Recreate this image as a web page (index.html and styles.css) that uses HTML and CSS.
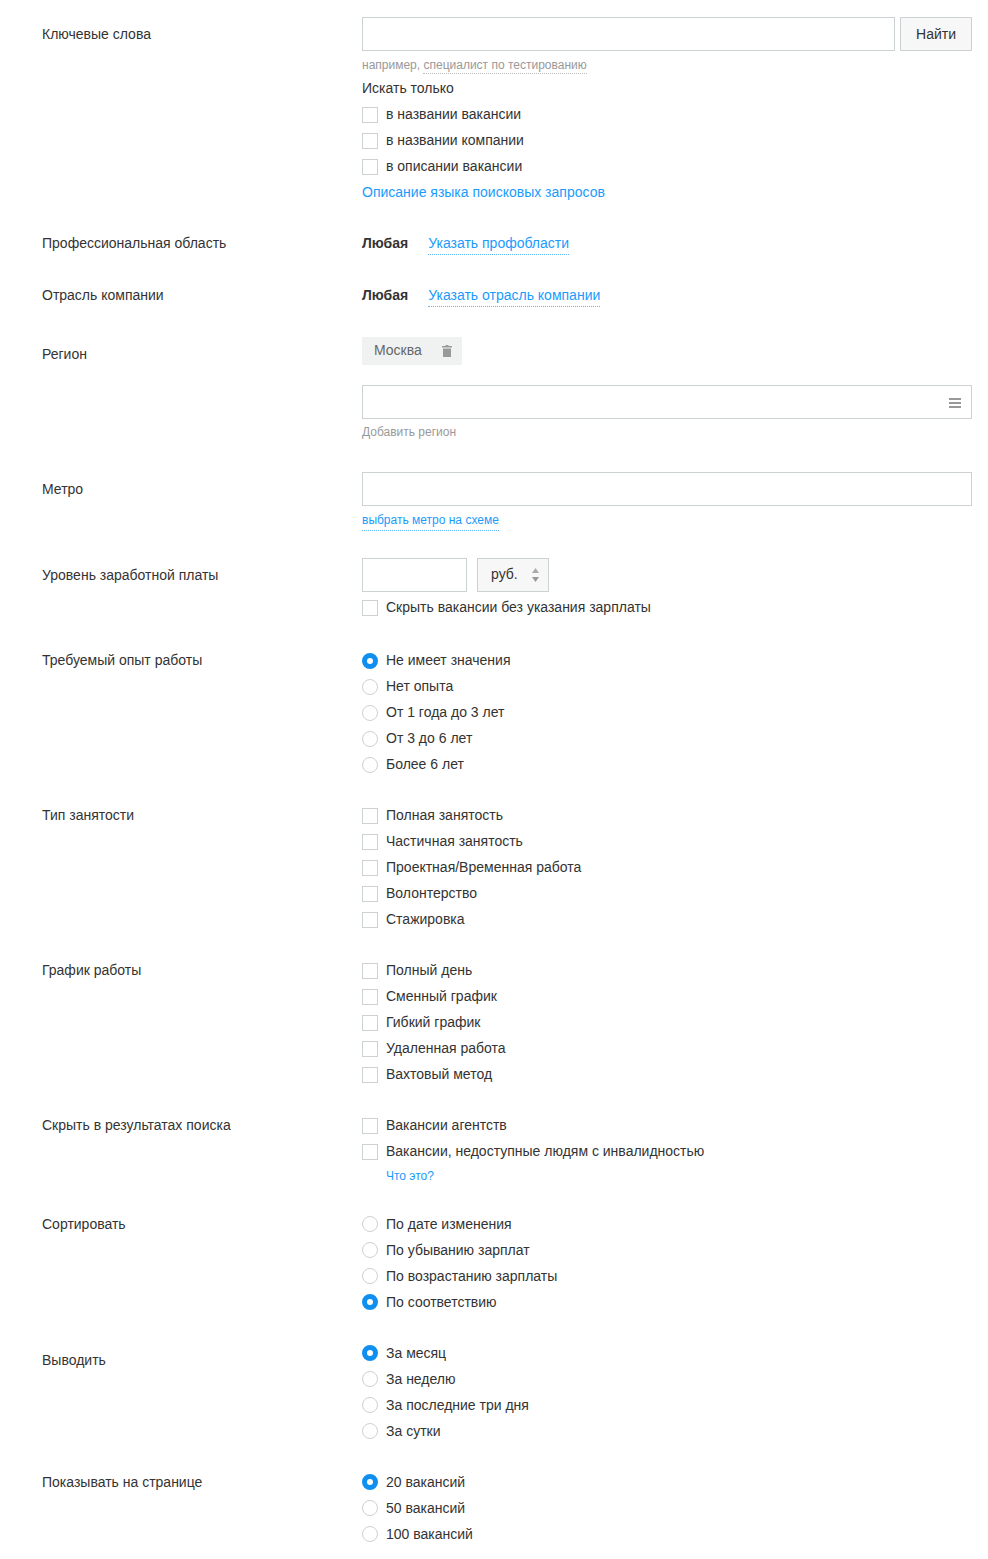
FILE: index.html
```html
<!DOCTYPE html>
<html lang="ru">
<head>
  <meta charset="UTF-8">
  <title>Расширенный поиск</title>
  <link rel="stylesheet" href="styles.css">
</head>
<body>

  <form class="search-form">

    <div class="row">
      <div class="row-label row-label--input">Ключевые слова</div>
      <div class="row-body">
        <div class="search-line">
          <input type="text" class="field field--grow">
          <button type="button" class="btn">Найти</button>
        </div>
        <div class="hint hint--first">например, <span class="hint-sample">специалист по тестированию</span></div>
        <div class="line">Искать только</div>
        <label class="option"><input type="checkbox"> в названии вакансии</label>
        <label class="option"><input type="checkbox"> в названии компании</label>
        <label class="option"><input type="checkbox"> в описании вакансии</label>
        <div class="line"><a href="#" class="link">Описание языка поисковых запросов</a></div>
      </div>
    </div>

    <div class="row row--prof">
      <div class="row-label">Профессиональная область</div>
      <div class="row-body line">
        <b class="any">Любая</b><a href="#" class="link link--dotted">Указать профобласти</a>
      </div>
    </div>

    <div class="row row--region-before">
      <div class="row-label">Отрасль компании</div>
      <div class="row-body line">
        <b class="any">Любая</b><a href="#" class="link link--dotted">Указать отрасль компании</a>
      </div>
    </div>

    <div class="row row--tight">
      <div class="row-label row-label--input">Регион</div>
      <div class="row-body">
        <div class="tag">
          <span class="tag-name">Москва</span>
          <svg class="tag-trash" width="10" height="12" viewBox="0 0 10 12">
            <path d="M3.5 0h3v1H10v1.5H0V1h3.5zM1 3.5h8V12H1z" fill="#999"/>
          </svg>
        </div>
        <div class="select-field">
          <input type="text" class="field">
          <svg class="select-field-icon" width="12" height="10" viewBox="0 0 12 10">
            <path d="M0 0h12v2H0zM0 4h12v2H0zM0 8h12v2H0z" fill="#999"/>
          </svg>
        </div>
        <div class="hint">Добавить регион</div>
      </div>
    </div>

    <div class="row">
      <div class="row-label row-label--input">Метро</div>
      <div class="row-body">
        <input type="text" class="field">
        <div class="hint hint--metro"><a href="#" class="link link--dotted">выбрать метро на схеме</a></div>
      </div>
    </div>

    <div class="row row--salary">
      <div class="row-label row-label--input">Уровень заработной платы</div>
      <div class="row-body">
        <div class="salary-line">
          <input type="text" class="field field--salary">
          <div class="currency">
            <span class="currency-name">руб.</span>
            <svg width="7" height="14" viewBox="0 0 7 14">
              <path d="M3.5 0L7 5H0z" fill="#aaa"/>
              <path d="M3.5 14L0 9h7z" fill="#999"/>
            </svg>
          </div>
        </div>
        <label class="option option--after-field"><input type="checkbox"> Скрыть вакансии без указания зарплаты</label>
      </div>
    </div>

    <div class="row">
      <div class="row-label">Требуемый опыт работы</div>
      <div class="row-body">
        <label class="option"><input type="radio" name="experience" checked> Не имеет значения</label>
        <label class="option"><input type="radio" name="experience"> Нет опыта</label>
        <label class="option"><input type="radio" name="experience"> От 1 года до 3 лет</label>
        <label class="option"><input type="radio" name="experience"> От 3 до 6 лет</label>
        <label class="option"><input type="radio" name="experience"> Более 6 лет</label>
      </div>
    </div>

    <div class="row">
      <div class="row-label">Тип занятости</div>
      <div class="row-body">
        <label class="option"><input type="checkbox"> Полная занятость</label>
        <label class="option"><input type="checkbox"> Частичная занятость</label>
        <label class="option"><input type="checkbox"> Проектная/Временная работа</label>
        <label class="option"><input type="checkbox"> Волонтерство</label>
        <label class="option"><input type="checkbox"> Стажировка</label>
      </div>
    </div>

    <div class="row">
      <div class="row-label">График работы</div>
      <div class="row-body">
        <label class="option"><input type="checkbox"> Полный день</label>
        <label class="option"><input type="checkbox"> Сменный график</label>
        <label class="option"><input type="checkbox"> Гибкий график</label>
        <label class="option"><input type="checkbox"> Удаленная работа</label>
        <label class="option"><input type="checkbox"> Вахтовый метод</label>
      </div>
    </div>

    <div class="row row--hide">
      <div class="row-label">Скрыть в результатах поиска</div>
      <div class="row-body">
        <label class="option"><input type="checkbox"> Вакансии агентств</label>
        <label class="option"><input type="checkbox"> Вакансии, недоступные людям с инвалидностью</label>
        <div class="hint hint--option"><a href="#" class="link">Что это?</a></div>
      </div>
    </div>

    <div class="row row--radio-up">
      <div class="row-label">Сортировать</div>
      <div class="row-body">
        <label class="option"><input type="radio" name="sort"> По дате изменения</label>
        <label class="option"><input type="radio" name="sort"> По убыванию зарплат</label>
        <label class="option"><input type="radio" name="sort"> По возрастанию зарплаты</label>
        <label class="option"><input type="radio" name="sort" checked> По соответствию</label>
      </div>
    </div>

    <div class="row row--radio-up">
      <div class="row-label row-label--low">Выводить</div>
      <div class="row-body">
        <label class="option"><input type="radio" name="period" checked> За месяц</label>
        <label class="option"><input type="radio" name="period"> За неделю</label>
        <label class="option"><input type="radio" name="period"> За последние три дня</label>
        <label class="option"><input type="radio" name="period"> За сутки</label>
      </div>
    </div>

    <div class="row row--radio-up">
      <div class="row-label">Показывать на странице</div>
      <div class="row-body">
        <label class="option"><input type="radio" name="perpage" checked> 20 вакансий</label>
        <label class="option"><input type="radio" name="perpage"> 50 вакансий</label>
        <label class="option"><input type="radio" name="perpage"> 100 вакансий</label>
      </div>
    </div>

  </form>

</body>
</html>
```

FILE: styles.css
```css
body { margin: 0; padding: 0; background: white; color: #333; font-family: "Liberation Sans", Arial, sans-serif; font-size: 14px; }
a { text-decoration: none; }

.search-form { padding: 17px 16px 0 42px; }

.row { display: grid; grid-template-columns: 320px 610px; margin-bottom: 25px; }
.row--prof { margin-bottom: 26px; }
.row--region-before { margin-bottom: 29px; }
.row--tight { margin-bottom: 27px; }
.row--salary { margin-bottom: 27px; }
.row--hide { margin-bottom: 23px; }

.row-label { line-height: 26px; }
.row-label--input { line-height: 34px; }
.row-label--low { padding-top: 7px; }

.row-body { min-width: 0; }
.line { line-height: 26px; }

.search-line { display: flex; gap: 5px; }
.salary-line { display: flex; gap: 10px; }

.field {
  display: block;
  box-sizing: border-box;
  width: 100%;
  height: 34px;
  padding: 0 10px;
  border: 1px solid #ccd1d4;
  background: white;
  outline: none;
}
.field--grow { flex: 1; width: auto; }
.field--salary { width: 105px; }

.btn {
  box-sizing: border-box;
  width: 72px;
  height: 34px;
  padding: 0;
  border: 1px solid #ccd1d4;
  background: #f7f7f7;
  color: #333;
  font-family: inherit;
  font-size: 14px;
  cursor: pointer;
}

.hint { color: #999; font-size: 12px; line-height: 26px; }
.hint--first { line-height: 14px; padding: 7px 0 3px; }
.hint--metro { padding-top: 1px; }
.hint--option { padding-left: 24px; line-height: 24px; }
.hint-sample { padding-bottom: 1px; border-bottom: 1px dotted #bbb; }

.link { color: #1a9bfc; }
.link--dotted { padding-bottom: 3px; border-bottom: 1px dotted #5db8f8; }

.any { margin-right: 20px; }

.option { display: flex; align-items: center; height: 26px; }
.option--after-field { margin-top: 2px; }
.option input {
  appearance: none;
  box-sizing: border-box;
  flex: none;
  width: 16px;
  height: 16px;
  margin: 2px 8px 0 0;
  border: 1px solid #ccd1d4;
  background: white;
}
.option input[type="radio"] { border-radius: 50%; }
.option input[type="radio"]:checked { border: 5px solid #0f8ff0; }
.row--radio-up .option input { margin-top: 0; }

.tag {
  display: flex;
  align-items: center;
  justify-content: space-between;
  box-sizing: border-box;
  width: 100px;
  height: 28px;
  margin-bottom: 20px;
  padding: 0 10px 0 12px;
  background: #f0f2f2;
  color: #666;
}
.tag-name { margin-bottom: 2px; }

.select-field { position: relative; }
.select-field-icon { position: absolute; right: 11px; top: 13px; }

.currency {
  display: flex;
  align-items: center;
  justify-content: space-between;
  box-sizing: border-box;
  width: 72px;
  height: 34px;
  padding: 0 9px 0 13px;
  border: 1px solid #ccd1d4;
  background: #f7f7f7;
}
.currency-name { margin-bottom: 2px; }
```
